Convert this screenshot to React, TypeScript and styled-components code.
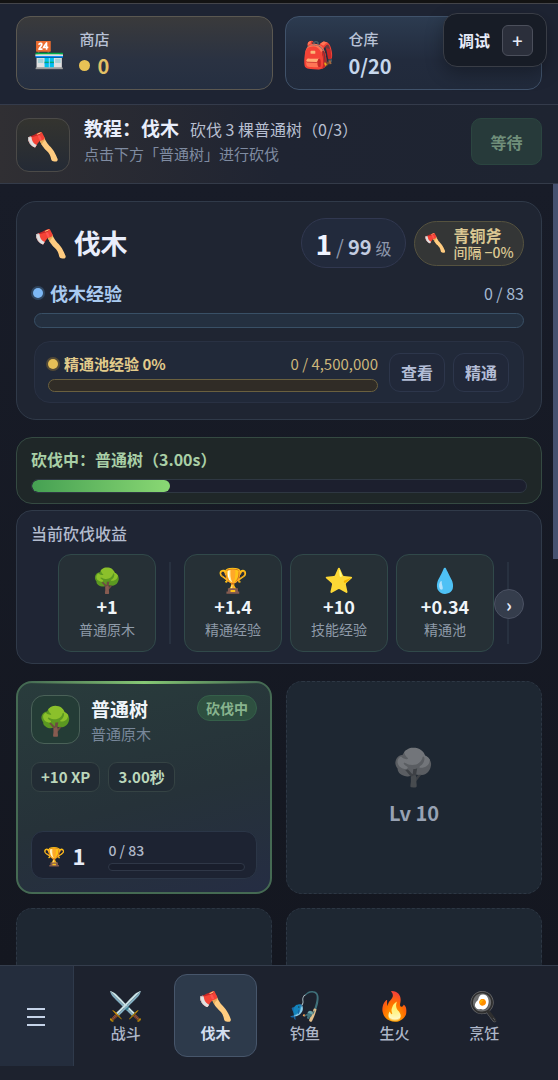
import React from "react";
import styled, { createGlobalStyle, css } from "styled-components";

const Global = createGlobalStyle`
  *, *::before, *::after { box-sizing: border-box; }
  html, body, #root { height: 100%; }
  body {
    margin: 0;
    background: #151721;
    color: #e6ebf8;
    font-family: "Noto Sans CJK SC", "Noto Sans", "Noto Color Emoji", sans-serif;
    font-size: 16px;
    line-height: 20px;
  }
  button { font: inherit; color: inherit; margin: 0; padding: 0; cursor: pointer; }
  h1, h2, p { margin: 0; font-size: inherit; font-weight: inherit; }
`;

const Page = styled.div`
  position: relative;
  display: flex;
  flex-direction: column;
  height: 100vh;
  overflow: hidden;
  border-top: 3px solid #131313;
`;

const Emoji = styled.span<{ $size: number; $dim?: boolean }>`
  display: block;
  font-family: "Noto Color Emoji", sans-serif;
  font-size: ${(p) => p.$size}px;
  line-height: 1.2;
  white-space: nowrap;
  ${(p) => p.$dim && css`filter: grayscale(1); opacity: 0.6;`}
`;

/* top bar */
const TopBar = styled.header`
  flex: none;
  display: grid;
  grid-template-columns: 1fr 1fr;
  gap: 12px;
  padding: 12px 16px 14px;
  background: #1e2433;
  border-top: 1px solid #44454a;
  border-bottom: 1px solid #343b4b;
`;

const StatCard = styled.button<{ $tone: "gold" | "blue" }>`
  display: flex;
  align-items: center;
  gap: 14px;
  height: 74px;
  padding: 0 16px;
  text-align: left;
  border-radius: 14px;
  border: 1px solid ${(p) => (p.$tone === "gold" ? "#5b5851" : "#40526a")};
  background: ${(p) =>
    p.$tone === "gold"
      ? "linear-gradient(180deg, #3a3a3b, #2a3242 60%, #252f41)"
      : "linear-gradient(180deg, #2c3b50, #222b3d 60%, #212a3b)"};
  ${Emoji} { padding-top: 5px; }
`;

const StatText = styled.span`
  display: flex;
  flex-direction: column;
  gap: 3px;
`;

const StatLabel = styled.span`
  font-size: 15px;
  line-height: 22px;
  font-weight: 500;
  color: #b9c2d6;
`;

const StatValue = styled.span<{ $gold?: boolean }>`
  display: flex;
  align-items: center;
  gap: 7px;
  font-size: 20px;
  line-height: 26px;
  font-weight: 700;
  color: ${(p) => (p.$gold ? "#e2c166" : "#c6d7ec")};
`;

const Dot = styled.i<{ $color: string; $halo?: string }>`
  flex: none;
  width: ${(p) => (p.$halo ? 10 : 11)}px;
  height: ${(p) => (p.$halo ? 10 : 11)}px;
  border-radius: 50%;
  background: ${(p) => p.$color};
  box-shadow: ${(p) => (p.$halo ? `0 0 0 2px ${p.$halo}` : "none")};
`;

const DebugPanel = styled.div`
  position: absolute;
  z-index: 3;
  top: 10px;
  right: 11px;
  display: flex;
  align-items: center;
  gap: 12px;
  height: 54px;
  padding: 0 13px 0 14px;
  border: 1px solid #393d46;
  border-radius: 14px;
  background: #171c26;
  box-shadow: 0 6px 18px rgba(0, 0, 0, 0.3);
  font-weight: 700;
`;

const PlusButton = styled.button`
  width: 31px;
  height: 31px;
  border: 1px solid #4b4f5b;
  border-radius: 6px;
  background: #2b2f3b;
  font-size: 18px;
  line-height: 27px;
  font-weight: 500;
`;

/* tutorial strip */
const Tutorial = styled.section`
  flex: none;
  display: flex;
  align-items: flex-start;
  gap: 14px;
  height: 79px;
  padding: 13px 16px 0;
  background: linear-gradient(90deg, #302f33, #1f2432 50%, #1e2431);
  border-bottom: 1px solid #343b49;
`;

const IconTile = styled.span<{ $size: number; $green?: boolean }>`
  flex: none;
  display: flex;
  align-items: center;
  justify-content: center;
  width: ${(p) => p.$size}px;
  height: ${(p) => p.$size}px;
  border-radius: 13px;
  border: 1px solid ${(p) => (p.$green ? "#4a6158" : "#4b4a48")};
  background: ${(p) => (p.$green ? "#243c36" : "linear-gradient(180deg, #34342f, #242a35)")};
  ${Emoji} { padding-top: 4px; }
`;

const TutorialText = styled.div`
  flex: 1;
  min-width: 0;
  white-space: nowrap;
`;

const TutorialHead = styled.p`
  display: flex;
  align-items: baseline;
  gap: 11px;
  margin-bottom: 2px;
  line-height: 20px;
  color: #b7bfd0;
  strong { font-size: 19px; font-weight: 700; color: #e9eefb; }
`;

const TutorialHint = styled.p`
  font-size: 15px;
  line-height: 26px;
  color: #7f8ba1;
`;

const WaitButton = styled.button`
  width: 71px;
  height: 47px;
  border: 1px solid #2b4540;
  border-radius: 10px;
  background: #273a3a;
  color: #708f7a;
  font-weight: 700;
`;

/* scrolling content */
const Viewport = styled.main`
  position: relative;
  flex: 1;
  min-height: 0;
  overflow: hidden;
  padding: 17px 16px 0;
  background: linear-gradient(180deg, #181c28, #141720);
`;

const ScrollThumb = styled.div`
  position: absolute;
  top: 0;
  right: 0;
  width: 5px;
  height: 48%;
  background: #46516f;
`;

const Panel = styled.section<{ $green?: boolean }>`
  border: 1px solid ${(p) => (p.$green ? "#354a42" : "#303a49")};
  border-radius: 16px;
  background: ${(p) => (p.$green ? "#1f2728" : "#1f2534")};
`;

const SkillPanel = styled(Panel)`
  padding: 16px 17px;
  border-radius: 20px;
  height: 219px;
  margin-bottom: 17px;
  background: #1f2532;
`;

const Row = styled.div`
  display: flex;
  align-items: center;
  justify-content: space-between;
  white-space: nowrap;
`;

const Title = styled.h1`
  flex: 1;
  display: flex;
  align-items: center;
  gap: 6px;
  font-size: 27px;
  line-height: 36px;
  font-weight: 700;
  color: #e9eefc;
  ${Emoji} { padding-top: 3px; }
`;

const LevelPill = styled.div`
  display: flex;
  align-items: baseline;
  justify-content: center;
  gap: 4px;
  width: 105px;
  height: 50px;
  border: 1px solid #313850;
  border-radius: 25px;
  background: #222a3c;
  line-height: 48px;
  font-size: 20px;
  color: #8c96ab;
  b { font-size: 28px; color: #f0f4ff; }
  strong { font-weight: 700; color: #c3cce0; }
  small { font-size: 16px; }
`;

const ToolPill = styled.div`
  display: flex;
  align-items: center;
  gap: 7px;
  width: 110px;
  height: 45px;
  margin-left: 8px;
  padding-left: 9px;
  border: 1px solid #55523f;
  border-radius: 23px;
  background: #343636;
  color: #dbc893;
  p { font-size: 14px; line-height: 16px; font-weight: 500; }
  p:first-child { font-size: 16px; line-height: 18px; font-weight: 700; }
`;

const BarLabel = styled.span<{ $tone: "blue" | "gold" }>`
  display: flex;
  align-items: center;
  gap: ${(p) => (p.$tone === "blue" ? 7 : 6)}px;
  font-size: ${(p) => (p.$tone === "blue" ? 18 : 15)}px;
  line-height: 24px;
  font-weight: 700;
  color: ${(p) => (p.$tone === "blue" ? "#a9caf0" : "#e2cb8b")};
`;

const BarValue = styled.span<{ $tone: "blue" | "gold" }>`
  font-size: ${(p) => (p.$tone === "blue" ? 16 : 15)}px;
  color: ${(p) => (p.$tone === "blue" ? "#a4b9d3" : "#cdb77b")};
`;

const XpRow = styled(Row)`
  height: 22px;
  margin: 14px 0 9px -1px;
`;

const Track = styled.div<{ $h: number; $bg: string; $line: string }>`
  height: ${(p) => p.$h}px;
  border: 1px solid ${(p) => p.$line};
  border-radius: ${(p) => p.$h}px;
  background: ${(p) => p.$bg};
  overflow: hidden;
`;

const Fill = styled.div`
  height: 100%;
  border-radius: 8px;
  background: linear-gradient(90deg, #45a052, #8ad874);
`;

const MasteryBox = styled.div`
  display: flex;
  align-items: center;
  gap: 8px;
  height: 62px;
  margin-top: 13px;
  padding: 0 14px 0 13px;
  border: 1px solid #293143;
  border-radius: 16px;
  background: #212939;
`;

const MasteryBar = styled.div`
  flex: 1;
  margin-right: 3px;
  ${Row} { margin-bottom: 3px; }
`;

const SmallButton = styled.button`
  width: 56px;
  height: 39px;
  border: 1px solid #2d364b;
  border-radius: 11px;
  background: #212839;
  color: #b3bdd6;
  font-weight: 700;
`;

const ActionPanel = styled(Panel)`
  height: 67px;
  margin-bottom: 6px;
  padding: 9px 14px;
  h2 { line-height: 24px; font-weight: 700; color: #a9cfa6; margin-bottom: 8px; }
`;

const GainPanel = styled(Panel)`
  position: relative;
  height: 154px;
  margin-bottom: 17px;
  padding: 10px 14px;
  h2 { line-height: 24px; font-weight: 500; color: #b2bbce; margin-bottom: 9px; }
`;

const GainList = styled.div`
  display: flex;
  align-items: center;
  justify-content: center;
  gap: 8px;
  padding-left: 14px;
`;

const Divider = styled.i`
  width: 2px;
  height: 82px;
  margin: 0 5px;
  background: #283140;
`;

const GainTile = styled.div`
  display: flex;
  flex-direction: column;
  align-items: center;
  width: 98px;
  height: 98px;
  padding-top: 12px;
  border: 1px solid #31494a;
  border-radius: 13px;
  background: #263036;
  b { font-size: 18px; line-height: 20px; color: #f0f5f9; font-weight: 700; }
  small { margin-top: 2px; font-size: 14px; line-height: 22px; color: #8f9ba9; }
`;

const NextButton = styled.button`
  position: absolute;
  top: 78px;
  right: 17px;
  width: 30px;
  height: 30px;
  border: 1px solid #4b5263;
  border-radius: 50%;
  background: #353d4c;
  font-size: 18px;
  font-weight: 700;
  line-height: 24px;
`;

/* tree cards */
const TreeGrid = styled.div`
  display: grid;
  grid-template-columns: 1fr 1fr;
  gap: 14px;
`;

const ActiveTree = styled.article`
  position: relative;
  display: flex;
  flex-direction: column;
  height: 213px;
  padding: 12px 13px 13px;
  border: 2px solid #456a53;
  border-radius: 16px;
  background: linear-gradient(165deg, #293c3c, #263239 55%, #252d43);
  &::before {
    content: "";
    position: absolute;
    inset: -2px 8px auto;
    height: 3px;
    background: linear-gradient(90deg, transparent, #86c975, transparent);
  }
`;

const TreeHead = styled.div`
  display: flex;
  align-items: flex-start;
  gap: 11px;
  h2 { font-size: 19px; line-height: 28px; font-weight: 700; color: #f0f5fa; }
  p { font-size: 15px; line-height: 22px; color: #78879a; }
`;

const TreeName = styled.div`
  flex: 1;
`;

const Badge = styled.span`
  padding: 0 8px;
  border: 1px solid #35604a;
  border-radius: 13px;
  background: #2e5040;
  font-size: 14px;
  line-height: 24px;
  font-weight: 700;
  color: #88b48e;
`;

const Chips = styled.div`
  display: flex;
  gap: 8px;
  margin-top: 17px;
  span {
    padding: 0 9px;
    border: 1px solid #354344;
    border-radius: 9px;
    background: #222c34;
    font-size: 15px;
    line-height: 28px;
    font-weight: 700;
    color: #bcd7bb;
  }
`;

const MasteryStrip = styled.div`
  display: flex;
  align-items: center;
  height: 48px;
  margin-top: auto;
  padding: 0 11px;
  border: 1px solid #2b3647;
  border-radius: 12px;
  background: #1d2332;
  b { width: 36px; margin-left: 7px; font-size: 22px; line-height: 28px; }
  ${Emoji} { padding-top: 3px; }
`;

const StripBar = styled.div`
  flex: 1;
  font-size: 14px;
  line-height: 20px;
  font-weight: 500;
  color: #b0b9c9;
  p { margin-bottom: 3px; }
`;

const LockedTree = styled.article`
  display: flex;
  flex-direction: column;
  align-items: center;
  justify-content: center;
  gap: 7px;
  height: 213px;
  border: 1px dashed #2d3744;
  border-radius: 16px;
  background: #1e2732;
  font-size: 20px;
  line-height: 30px;
  font-weight: 700;
  color: #98a2b3;
`;

/* bottom navigation */
const NavBar = styled.nav`
  flex: none;
  display: flex;
  height: 115px;
  padding-bottom: 14px;
  background: #1d222e;
  border-top: 1px solid #343d4c;
`;

const MenuButton = styled.button`
  flex: none;
  display: flex;
  align-items: center;
  justify-content: center;
  width: 74px;
  padding: 2px 2px 0 0;
  border: 0;
  border-right: 1px solid #2f3a4b;
  background: #242d3d;
`;

const NavItems = styled.div`
  flex: 1;
  display: flex;
  gap: 6px;
  padding: 8px 32px 9px 10px;
`;

const NavItem = styled.button<{ $active?: boolean }>`
  flex: 1;
  display: flex;
  flex-direction: column;
  align-items: center;
  justify-content: center;
  padding-top: 2px;
  border: 1px solid ${(p) => (p.$active ? "#47566b" : "transparent")};
  border-radius: 13px;
  background: ${(p) => (p.$active ? "#2d3a4b" : "transparent")};
  font-size: 15px;
  line-height: 20px;
  font-weight: ${(p) => (p.$active ? 700 : 500)};
  color: ${(p) => (p.$active ? "#d3def0" : "#aeb7c9")};
`;

const gains = [
  { icon: "🏆", amount: "+1.4", name: "精通经验" },
  { icon: "⭐", amount: "+10", name: "技能经验" },
  { icon: "💧", amount: "+0.34", name: "精通池" },
];

const skills = [
  { icon: "⚔️", name: "战斗" },
  { icon: "🪓", name: "伐木", active: true },
  { icon: "🎣", name: "钓鱼" },
  { icon: "🔥", name: "生火" },
  { icon: "🍳", name: "烹饪" },
];

function Gain({ icon, amount, name }: { icon: string; amount: string; name: string }) {
  return (
    <GainTile>
      <Emoji $size={24}>{icon}</Emoji>
      <b>{amount}</b>
      <small>{name}</small>
    </GainTile>
  );
}

export default function App() {
  return (
    <>
      <Global />
      <Page>
        <TopBar>
          <StatCard $tone="gold">
            <Emoji $size={26}>🏪</Emoji>
            <StatText>
              <StatLabel>商店</StatLabel>
              <StatValue $gold><Dot $color="#e9c255" />0</StatValue>
            </StatText>
          </StatCard>
          <StatCard $tone="blue">
            <Emoji $size={26}>🎒</Emoji>
            <StatText>
              <StatLabel>仓库</StatLabel>
              <StatValue>0/20</StatValue>
            </StatText>
          </StatCard>
        </TopBar>
        <DebugPanel>
          调试
          <PlusButton aria-label="展开">+</PlusButton>
        </DebugPanel>

        <Tutorial>
          <IconTile $size={54}><Emoji $size={27}>🪓</Emoji></IconTile>
          <TutorialText>
            <TutorialHead><strong>教程：伐木</strong>砍伐 3 棵普通树（0/3）</TutorialHead>
            <TutorialHint>点击下方「普通树」进行砍伐</TutorialHint>
          </TutorialText>
          <WaitButton>等待</WaitButton>
        </Tutorial>

        <Viewport>
          <SkillPanel>
            <Row>
              <Title><Emoji $size={27}>🪓</Emoji>伐木</Title>
              <LevelPill><b>1</b>/<strong>99</strong><small>级</small></LevelPill>
              <ToolPill>
                <Emoji $size={18}>🪓</Emoji>
                <div>
                  <p>青铜斧</p>
                  <p>间隔 −0%</p>
                </div>
              </ToolPill>
            </Row>
            <XpRow>
              <BarLabel $tone="blue"><Dot $color="#7db8f5" $halo="#30465f" />伐木经验</BarLabel>
              <BarValue $tone="blue">0 / 83</BarValue>
            </XpRow>
            <Track $h={15} $bg="#243040" $line="#395066" />
            <MasteryBox>
              <MasteryBar>
                <Row>
                  <BarLabel $tone="gold"><Dot $color="#e6bf57" $halo="#534a37" />精通池经验 0%</BarLabel>
                  <BarValue $tone="gold">0 / 4,500,000</BarValue>
                </Row>
                <Track $h={13} $bg="#302c26" $line="#6a603f" />
              </MasteryBar>
              <SmallButton>查看</SmallButton>
              <SmallButton>精通</SmallButton>
            </MasteryBox>
          </SkillPanel>

          <ActionPanel $green>
            <h2>砍伐中：普通树（3.00s）</h2>
            <Track $h={14} $bg="#1c1f2e" $line="#2e3742">
              <Fill style={{ width: "28%" }} />
            </Track>
          </ActionPanel>

          <GainPanel>
            <h2>当前砍伐收益</h2>
            <GainList>
              <Gain icon="🌳" amount="+1" name="普通原木" />
              <Divider />
              {gains.map((g) => <Gain key={g.name} {...g} />)}
              <Divider />
            </GainList>
            <NextButton aria-label="下一项">›</NextButton>
          </GainPanel>

          <TreeGrid>
            <ActiveTree>
              <TreeHead>
                <IconTile $size={49} $green><Emoji $size={28}>🌳</Emoji></IconTile>
                <TreeName>
                  <h2>普通树</h2>
                  <p>普通原木</p>
                </TreeName>
                <Badge>砍伐中</Badge>
              </TreeHead>
              <Chips><span>+10 XP</span><span>3.00秒</span></Chips>
              <MasteryStrip>
                <Emoji $size={18}>🏆</Emoji>
                <b>1</b>
                <StripBar>
                  <p>0 / 83</p>
                  <Track $h={8} $bg="#191e2c" $line="#2f3747" />
                </StripBar>
              </MasteryStrip>
            </ActiveTree>
            <LockedTree><Emoji $size={36} $dim>🌳</Emoji>Lv 10</LockedTree>
            <LockedTree />
            <LockedTree />
          </TreeGrid>
          <ScrollThumb />
        </Viewport>

        <NavBar>
          <MenuButton aria-label="菜单">
            <svg width="20" height="20" viewBox="0 0 20 20" stroke="#c5d3e8" strokeWidth="2">
              <path d="M1 2h18M1 10h18M1 18h18" />
            </svg>
          </MenuButton>
          <NavItems>
            {skills.map((s) => (
              <NavItem key={s.name} $active={s.active}>
                <Emoji $size={28}>{s.icon}</Emoji>
                {s.name}
              </NavItem>
            ))}
          </NavItems>
        </NavBar>
      </Page>
    </>
  );
}
